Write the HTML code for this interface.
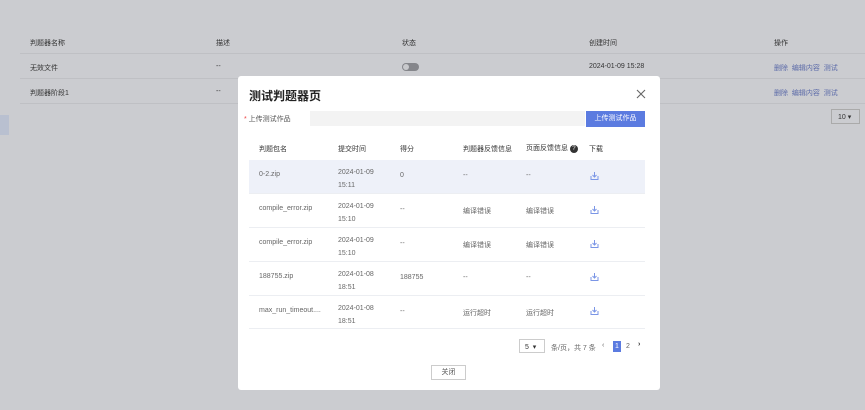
<!DOCTYPE html><html><head><meta charset="utf-8"><style>
body{margin:0;width:865px;height:410px;background:#cbccd0;font-family:"Liberation Sans","Noto Sans CJK SC",sans-serif;position:relative;overflow:hidden;font-size:7px;color:#333}
.a{position:absolute;white-space:nowrap}
.ln{position:absolute;height:1px;background:#bfc0c4}
.m{position:absolute;left:238px;top:76px;width:422px;height:314px;background:#fff;border-radius:3px}
.row{position:absolute;left:11px;width:396px;border-bottom:1px solid #eceef2}
.c{color:#666}
</style></head><body>
<div class="a" style="left:30px;top:38px">判题器名称</div>
<div class="a" style="left:216px;top:38px">描述</div>
<div class="a" style="left:402px;top:38px">状态</div>
<div class="a" style="left:589px;top:38px">创建时间</div>
<div class="a" style="left:774px;top:38px">操作</div>
<div class="ln" style="left:20px;top:53px;width:845px"></div>
<div class="a" style="left:30px;top:63px">无效文件</div>
<div class="a" style="left:216px;top:63px">--</div>
<div class="a" style="left:402px;top:63px;width:17px;height:8px;border-radius:4px;background:#85868b"><div style="margin:1px 1px;width:6px;height:6px;border-radius:3px;background:#c8c9cc"></div></div>
<div class="a" style="left:589px;top:63px">2024-01-09 15:28</div>
<div class="a" style="left:774px;top:63px;color:#5b6aa8">删除&nbsp;&nbsp;编辑内容&nbsp;&nbsp;测试</div>
<div class="ln" style="left:20px;top:78px;width:845px"></div>
<div class="a" style="left:30px;top:88px">判题器阶段1</div>
<div class="a" style="left:216px;top:88px">--</div>
<div class="a" style="left:774px;top:88px;color:#5b6aa8">删除&nbsp;&nbsp;编辑内容&nbsp;&nbsp;测试</div>
<div class="ln" style="left:20px;top:103px;width:845px"></div>
<div class="a" style="left:0;top:115px;width:9px;height:20px;background:#b9c0d0"></div>
<div class="a" style="left:831px;top:109px;width:29px;height:15px;border:1px solid #aaa;box-sizing:border-box;padding:3px 0 0 6px">10 ▾</div>

<div class="m">
<div class="a" style="left:11px;top:11px;font-size:12px;font-weight:bold;color:#222">测试判题器页</div>
<svg class="a" style="left:398px;top:13px" width="10" height="10" stroke="#666" stroke-width="1.1"><path d="M1 1L9 9M9 1L1 9"/></svg>
<div class="a" style="left:6px;top:38px;color:#555"><span style="color:#e44">*</span> 上传测试作品</div>
<div class="a" style="left:72px;top:35px;width:275px;height:15px;background:#f3f3f3"></div>
<div class="a" style="left:348px;top:35px;width:59px;height:16px;background:#5b7be0;color:#fff;text-align:center;line-height:16px">上传测试作品</div>
<div class="row" style="top:58px;height:26px"></div>
<div class="a" style="left:21px;top:68px">判题包名</div><div class="a" style="left:100px;top:68px">提交时间</div><div class="a" style="left:162px;top:68px">得分</div><div class="a" style="left:225px;top:68px">判题器反馈信息</div><div class="a" style="left:288px;top:67px">页面反馈信息 <span style="display:inline-block;width:8px;height:8px;border-radius:4px;background:#333;color:#fff;font-size:6px;text-align:center;line-height:8px">?</span></div><div class="a" style="left:351px;top:68px">下载</div>

<div class="row" style="top:84px;height:33px;background:#eef1f9"></div>
<div class="row" style="top:118px;height:33px"></div>
<div class="row" style="top:152px;height:33px"></div>
<div class="row" style="top:186px;height:33px"></div>
<div class="row" style="top:219px;height:33px"></div>

<div class="a c" style="left:21px;top:95px">0-2.zip</div><div class="a c" style="left:100px;top:90px;line-height:13px">2024-01-09<br>15:11</div><div class="a c" style="left:162px;top:96px">0</div><div class="a c" style="left:225px;top:96px">--</div><div class="a c" style="left:288px;top:96px">--</div>
<div class="a c" style="left:21px;top:129px">compile_error.zip</div><div class="a c" style="left:100px;top:124px;line-height:13px">2024-01-09<br>15:10</div><div class="a c" style="left:162px;top:130px">--</div><div class="a c" style="left:225px;top:130px">编译错误</div><div class="a c" style="left:288px;top:130px">编译错误</div>
<div class="a c" style="left:21px;top:163px">compile_error.zip</div><div class="a c" style="left:100px;top:158px;line-height:13px">2024-01-09<br>15:10</div><div class="a c" style="left:162px;top:164px">--</div><div class="a c" style="left:225px;top:164px">编译错误</div><div class="a c" style="left:288px;top:164px">编译错误</div>
<div class="a c" style="left:21px;top:197px">188755.zip</div><div class="a c" style="left:100px;top:192px;line-height:13px">2024-01-08<br>18:51</div><div class="a c" style="left:162px;top:198px">188755</div><div class="a c" style="left:225px;top:198px">--</div><div class="a c" style="left:288px;top:198px">--</div>
<div class="a c" style="left:21px;top:231px">max_run_timeout....</div><div class="a c" style="left:100px;top:226px;line-height:13px">2024-01-08<br>18:51</div><div class="a c" style="left:162px;top:232px">--</div><div class="a c" style="left:225px;top:232px">运行超时</div><div class="a c" style="left:288px;top:232px">运行超时</div>

<svg class="a" style="left:352px;top:96px" width="9" height="150" viewBox="0 0 9 150" fill="none" stroke="#7b96e6" stroke-width="1">
<g id="d"><path d="M4.5 0v5M2.5 3l2 2 2-2M1 4v3.5h7V4"/></g>
<use href="#d" y="34"/><use href="#d" y="68"/><use href="#d" y="101"/><use href="#d" y="135"/>
</svg>

<div class="a" style="left:281px;top:263px;width:26px;height:14px;border:1px solid #ccc;box-sizing:border-box;padding:3px 0 0 5px">5 &nbsp;▾</div>
<div class="a c" style="left:313px;top:267px">条/页，共 7 条</div>
<div class="a c" style="left:364px;top:266px">‹</div>
<div class="a" style="left:375px;top:265px;width:8px;height:11px;background:#5b7be0;color:#fff;text-align:center;line-height:11px">1</div>
<div class="a c" style="left:388px;top:267px">2</div>
<div class="a" style="left:400px;top:265px;font-weight:bold">›</div>
<div class="a" style="left:193px;top:289px;width:35px;height:15px;border:1px solid #ccc;box-sizing:border-box;text-align:center;line-height:13px;color:#555">关闭</div>
</div>
</body></html>
